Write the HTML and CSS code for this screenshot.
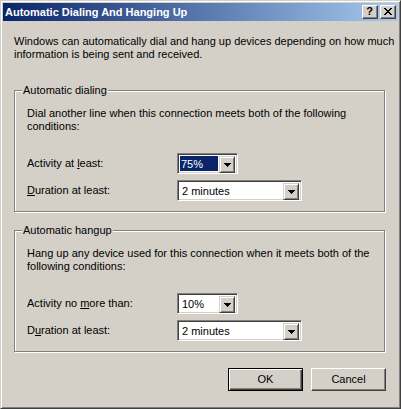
FILE: index.html
```html
<!DOCTYPE html>
<html>
<head>
<meta charset="utf-8">
<link rel="stylesheet" href="styles.css">
</head>
<body>
<div class="window">
  <div class="titlebar">
    <span class="title">Automatic Dialing And Hanging Up</span>
    <div class="cbtns">
      <span class="cbtn help">?</span>
      <span class="cbtn close"><svg width="8" height="7" viewBox="0 0 8 7" shape-rendering="crispEdges"><path d="M0 0h2v1H0zM6 0h2v1H6zM1 1h2v1H1zM5 1h2v1H5zM2 2h4v1H2zM3 3h2v1H3zM2 4h4v1H2zM1 5h2v1H1zM5 5h2v1H5zM0 6h2v1H0zM6 6h2v1H6z" fill="#000"/></svg></span>
    </div>
  </div>
  <div class="body">
    <p class="intro">Windows can automatically dial and hang up devices depending on how much<br>information is being sent and received.</p>

    <div class="group first">
      <span class="legend">Automatic dialing</span>
      <p class="desc">Dial another line when this connection meets both of the following<br>conditions:</p>
      <div class="rows">
        <div class="row">
          <span class="label">Activity at <u>l</u>east:</span>
          <div class="combo short selected"><span class="val">75%</span><span class="dd"><svg width="7" height="4" viewBox="0 0 7 4" shape-rendering="crispEdges"><path d="M0 0h7v1H0zM1 1h5v1H1zM2 2h3v1H2zM3 3h1v1H3z" fill="#000"/></svg></span></div>
        </div>
        <div class="row">
          <span class="label"><u>D</u>uration at least:</span>
          <div class="combo long"><span class="val">2 minutes</span><span class="dd"><svg width="7" height="4" viewBox="0 0 7 4" shape-rendering="crispEdges"><path d="M0 0h7v1H0zM1 1h5v1H1zM2 2h3v1H2zM3 3h1v1H3z" fill="#000"/></svg></span></div>
        </div>
      </div>
    </div>

    <div class="group second">
      <span class="legend">Automatic hangup</span>
      <p class="desc">Hang up any device used for this connection when it meets both of the<br>following conditions:</p>
      <div class="rows">
        <div class="row">
          <span class="label">Activity no <u>m</u>ore than:</span>
          <div class="combo short"><span class="val">10%</span><span class="dd"><svg width="7" height="4" viewBox="0 0 7 4" shape-rendering="crispEdges"><path d="M0 0h7v1H0zM1 1h5v1H1zM2 2h3v1H2zM3 3h1v1H3z" fill="#000"/></svg></span></div>
        </div>
        <div class="row">
          <span class="label">D<u>u</u>ration at least:</span>
          <div class="combo long"><span class="val">2 minutes</span><span class="dd"><svg width="7" height="4" viewBox="0 0 7 4" shape-rendering="crispEdges"><path d="M0 0h7v1H0zM1 1h5v1H1zM2 2h3v1H2zM3 3h1v1H3z" fill="#000"/></svg></span></div>
        </div>
      </div>
    </div>

    <div class="buttons">
      <span class="btn default">OK</span>
      <span class="btn">Cancel</span>
    </div>
  </div>
</div>
</body>
</html>
```

FILE: styles.css
```css
* { box-sizing: border-box; }

html, body {
  margin: 0;
  padding: 0;
  background: #d4d0c8;
}

body {
  font-family: "Liberation Sans", Arial, sans-serif;
  font-size: 11px;
  color: #000;
}

.window {
  width: 401px;
  height: 409px;
  background: #d4d0c8;
  border: 1px solid;
  border-color: #d4d0c8 #404040 #404040 #d4d0c8;
  box-shadow: inset 1px 1px #fff, inset -1px -1px #808080;
  padding: 2px;
  display: flex;
  flex-direction: column;
}

.titlebar {
  height: 18px;
  flex: none;
  background: linear-gradient(to right, #0a246a, #a6caf0);
  display: flex;
  align-items: center;
  justify-content: space-between;
  padding: 0 2px 0 2px;
}

.title {
  color: #fff;
  font-weight: bold;
  font-size: 11px;
  line-height: 13px;
}

.cbtns {
  display: flex;
  gap: 2px;
}

.cbtn {
  width: 16px;
  height: 14px;
  background: #d4d0c8;
  border: 1px solid;
  border-color: #fff #404040 #404040 #fff;
  box-shadow: inset -1px -1px #808080;
  display: flex;
  align-items: center;
  justify-content: center;
  padding: 0 1px 1px 0;
}

.help {
  font-weight: bold;
  font-size: 11px;
  line-height: 11px;
}

.body {
  flex: 1;
  display: flex;
  flex-direction: column;
  padding: 0 12px 0 11px;
}

.intro {
  margin: 14px 0 0 0;
  line-height: 13px;
  white-space: nowrap;
}

.group {
  position: relative;
  border: 1px solid #808080;
  box-shadow: inset 1px 1px #fff, 1px 1px #fff;
  width: 371px;
  height: 122px;
  padding: 16px 0 0 12px;
}

.group.first { margin-top: 29px; }
.group.second { margin-top: 18px; }

.legend {
  position: absolute;
  top: -7px;
  left: 7px;
  padding: 0 1px;
  background: #d4d0c8;
  line-height: 13px;
}

.desc {
  margin: 0;
  line-height: 13px;
  white-space: nowrap;
}

.rows {
  margin-top: 20px;
  display: flex;
  flex-direction: column;
  gap: 6px;
}

.row {
  display: grid;
  grid-template-columns: 150px auto;
  align-items: center;
  justify-content: start;
}

.label {
  line-height: 13px;
}

.combo {
  height: 21px;
  background: #fff;
  border: 1px solid;
  border-color: #808080 #fff #fff #808080;
  box-shadow: inset 1px 1px #404040, inset -1px -1px #d4d0c8;
  padding: 2px;
  display: flex;
}

.combo.short { width: 61px; }
.combo.long { width: 125px; }

.val {
  flex: 1;
  line-height: 17px;
  padding-left: 2px;
  white-space: nowrap;
}

.combo.selected .val {
  background: #0a246a;
  color: #fff;
  padding-left: 1px;
  margin: 0 1px 0 0;
}

.dd {
  width: 16px;
  height: 17px;
  background: #d4d0c8;
  border: 1px solid;
  border-color: #d4d0c8 #404040 #404040 #d4d0c8;
  box-shadow: inset 1px 1px #fff, inset -1px -1px #808080;
  display: flex;
  align-items: center;
  justify-content: center;
}

.buttons {
  margin-top: 16px;
  display: flex;
  justify-content: flex-end;
  gap: 8px;
  padding-right: 0;
}

.btn {
  width: 75px;
  height: 23px;
  background: #d4d0c8;
  border: 1px solid;
  border-color: #fff #404040 #404040 #fff;
  box-shadow: inset -1px -1px #808080;
  display: flex;
  align-items: center;
  justify-content: center;
  line-height: 13px;
}

.btn.default {
  border-color: #000;
  box-shadow: inset 1px 1px #fff, inset -1px -1px #404040, inset -2px -2px #808080;
}
```
